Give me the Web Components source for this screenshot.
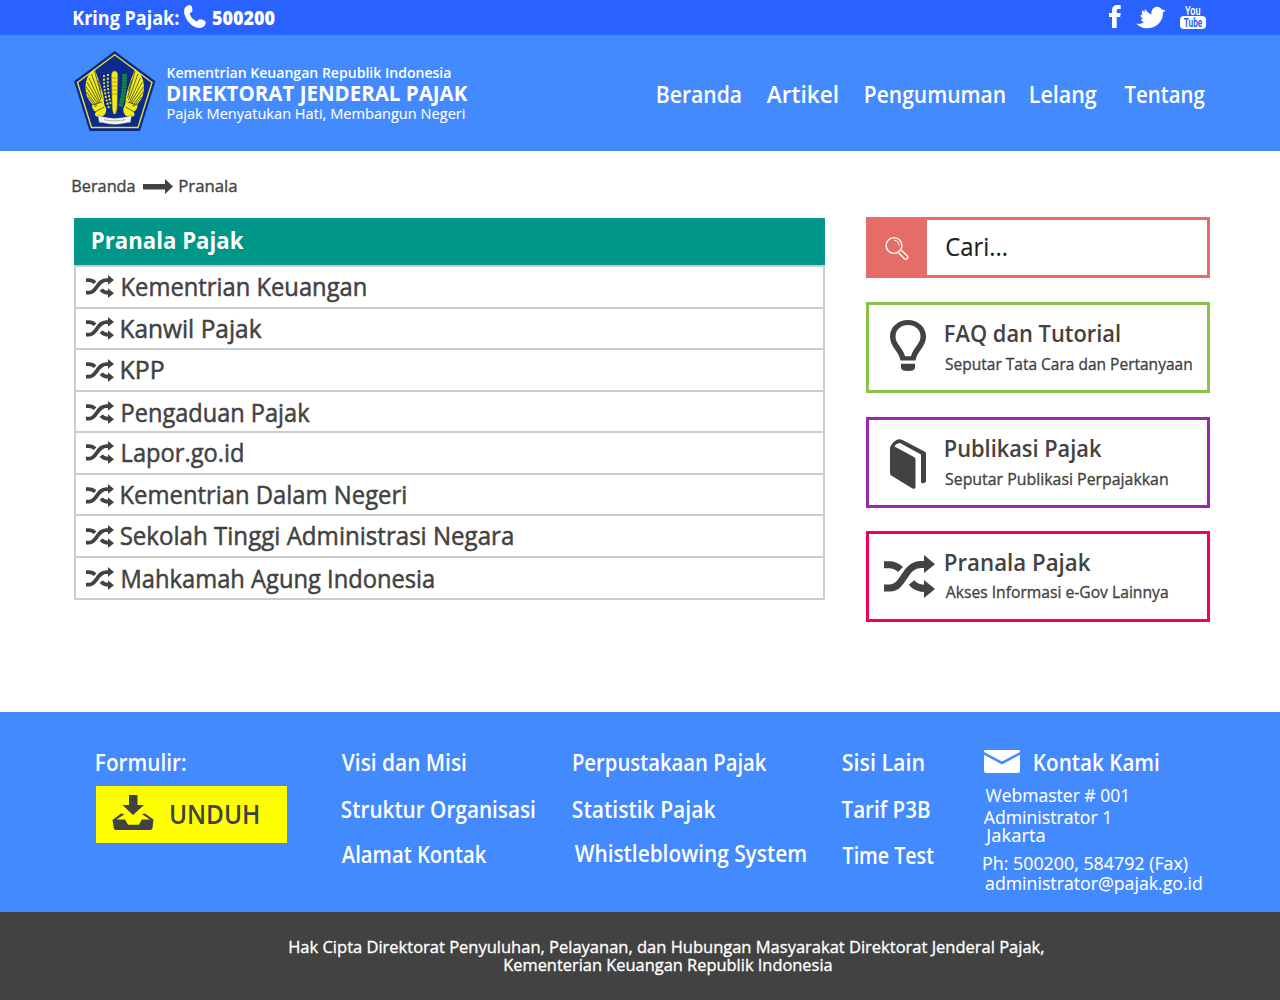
<!DOCTYPE html>
<html lang="id">
<head>
<meta charset="utf-8">
<title>Direktorat Jenderal Pajak</title>
<style>
html,body{margin:0;padding:0;background:#fff}
body{font-family:"Open Sans","Noto Sans",sans-serif}
</style>
</head>
<body>
<pajak-page></pajak-page>
<script>
/* One line of text, fitted to a given ink width; the box runs from cap height to baseline. */
class FitText extends HTMLElement {
  connectedCallback() {
    const w = +this.getAttribute('w'), s = +this.getAttribute('s') || 23, wt = this.getAttribute('wt') || 600;
    const h = Math.round(s * 0.72);
    const c = FitText.ctx || (FitText.ctx = document.createElement('canvas').getContext('2d'));
    const measure = z => { c.font = `${wt} ${z}px "Open Sans","Noto Sans",sans-serif`; return c.measureText(this.textContent); };
    const m = measure(s), b = measure(s * 10);
    const left = b.actualBoundingBoxLeft / 10, right = b.actualBoundingBoxRight / 10;
    const k = (w - 1.4) / (right + left);
    const A = Math.round(m.fontBoundingBoxAscent), D = Math.round(m.fontBoundingBoxDescent);
    const dy = Math.round(h - ((h - A - D) / 2 + A)) + (+this.getAttribute('dy') || 0);
    const stroke = wt === '500' ? s * 0.02 : wt === '400' ? s * 0.006 : 0;
    this.attachShadow({mode: 'open'}).innerHTML = `<style>
      :host{display:block;flex:none;width:${w}px;height:${h}px;line-height:${h}px;white-space:nowrap;
        font-size:${s}px;font-weight:${wt === '500' ? 400 : wt};-webkit-text-stroke:${stroke.toFixed(2)}px currentColor}
      span{display:block;width:max-content;transform-origin:0 0;
        transform:translate(${(left * k + 0.8).toFixed(2)}px,${dy}px) scaleX(${k.toFixed(4)})}
    </style><span><slot></slot></span>`;
  }
}
customElements.define('fit-text', FitText);

const wing = `<path fill="#f2ea1c" d="M20.500 18C13 23 10.500 32 12 41C12.500 46 15 50 18 53C17.500 57 20 60 22 61C20 63 21 66 25 66C30 66 33 62 32 57C29.500 53 30 50 29.500 46C28 37 24 27 20.500 18Z"/>
  <path stroke="#3c4a28" stroke-width=".8" fill="none" d="M20.500 20L28 47M17.500 23L27 49M15 27L26 51M13 31L25 52M12 36L24 53M12.500 41L23 55M14 46L22 56M18 54L28 51M21 61L30 56M24 29L27 40"/>`;
const ICONS = {
  shuffle: ['0 0 51 43', `<g fill="none" stroke="currentColor" stroke-width="7"><path d="M0 9.700H5C10 9.700 13 11 16.500 14.500"/><path d="M0 33H6C20 33 20 9.500 37 9.500H42"/><path d="M27.500 27.500C31 32 35 33.500 42 33.500"/></g><path fill="currentColor" d="M40 0L51 9.300L40 18ZM40 25L51 34L40 43Z"/>`],
  arrow: ['0 0 30 15', `<path fill="currentColor" d="M0 5H22V0L30 7.500L22 15V10.500H0Z"/>`],
  search: ['0 0 24 24', `<g fill="none" stroke="#fff" stroke-width="1.400"><circle cx="9" cy="9.500" r="7.900"/><path d="M9 4.200a5.500 5.500 0 0 1 5 5" stroke-width="1"/><path d="M13.600 16.800L19.500 22.700Q21 23.800 22.300 22.400Q23.400 21 22.200 19.700L16.300 14.200"/></g>`],
  bulb: ['0 0 36 51', `<path fill="currentColor" fill-rule="evenodd" d="M18 0C28 0 36 7 36 16.500C36 27 27 31 25.500 40.500H10.500C9 31 0 27 0 16.500C0 7 8 0 18 0ZM18 5C11 5 5.500 9.500 5.500 16.500C5.500 24 13 28 15 36.200H21C23 28 30.500 24 30.500 16.500C30.500 9.500 25 5 18 5Z"/><path fill="currentColor" d="M11 43.700H25V47.500Q25 51 18 51Q11 51 11 47.500Z"/>`],
  book: ['0 0 37 50', `<path fill="currentColor" d="M2.800 6Q0 7 0 9V34Q0 36 2 37L22.500 49.500Q25.500 50.500 25.500 48V20.500Q25.500 19 24 18L4.500 7.500Q5.500 4.500 10 4L31 15.500V43Q31.500 45 34 44Q36 43.500 36 42V14.500Q36 13 34.500 12.500L12 .8Q9-.6 6 1.200Q2 3.500 0 8Z"/>`],
  phone: ['0 0 22 23', `<path fill="currentColor" d="M4.500 .3Q6.500-.5 7.800 1.500L8.500 5Q8.700 7 6.300 7.800Q5.500 8.200 6 9.500Q7.500 13.500 12 16Q13.300 16.600 14 15.500Q15 13.700 17 14.300L20.500 15.600Q22.300 16.800 21.500 19Q20.300 22.500 16 22.900Q9 23.200 3.800 16Q-.5 10 .2 5Q.8 1.500 4.500 .3Z"/>`],
  fb: ['0 0 12 23', `<path fill="currentColor" d="M3 23V12H0V8H3V5.500Q3 0 8.300 0H11.700V4H9.500Q7.700 4 7.700 5.800V8H11.700L11.200 12H7.700V23Z"/>`],
  twitter: ['0 0 30 23', `<path fill="currentColor" d="M0 17.500Q4.500 18.800 8 16.300Q5.300 15.700 5 13.500L7.300 13Q4.300 11.300 4.700 8.700L6.800 9.200Q5 6.500 6.300 4L8.500 6L9 3Q12.500 7.500 15.300 8.500Q15.300 2 20 .8Q24 .2 25.800 3.300L29.700 4.800L27 6.300Q27.200 13.500 22 18.300Q17 22.800 9.500 22.300Q4 21.600 0 17.500Z"/>`],
  youtube: ['0 0 26 25', `<text x="5" y="10.500" font-family="Roboto,sans-serif" font-size="13.500" font-weight="500" fill="currentColor" textLength="15.500" lengthAdjust="spacingAndGlyphs">You</text><rect y="12" width="26" height="13" rx="4" fill="currentColor"/><text x="3.800" y="23.300" font-family="Roboto,sans-serif" font-size="13" font-weight="700" fill="#2962ff" textLength="18.500" lengthAdjust="spacingAndGlyphs">Tube</text>`],
  mail: ['0 0 36 23', `<path fill="currentColor" d="M0 2V1Q0 0 1.500 0H34.500Q36 0 36 1V2L18 11.500Z"/><path fill="currentColor" d="M0 4.700L18 14.500L36 4.700V21Q36 23 34 23H2Q0 23 0 21Z"/>`],
  inbox: ['0 0 42 35', `<path fill="currentColor" d="M17 0H25.500V10H32L21 20L10.500 10H17Z"/><path fill="currentColor" d="M.5 25L9 18.500L12.500 19.300L4.500 24.500H13L16 29.700H27L29.700 24.500H38L30 19.300L33 18.500L41.500 24.500L40.500 33Q40 35 38 35H4Q2 35 1.700 33Z"/>`],
  emblem: ['0 0 82 80', `<path fill="#0b2a8c" d="M40.700 0L81.500 30.300L66 80H15.500L0 30.300Z"/><path fill="none" stroke="#e8e032" stroke-width="1.400" d="M40.700 3.800L78 31.500L64 76.500H17.500L3.500 31.500Z"/>${wing}<g transform="matrix(-1 0 0 1 81.500 0)">${wing}</g>
    <path fill="#f2ea1c" stroke="#8e7d14" stroke-width=".5" d="M37.500 27V24Q37.800 20 40.700 20Q43.500 20 43.800 24V27L43 58L41.500 63H39.500L38.300 58Z"/><path stroke="#8e7d14" stroke-width=".6" d="M37.500 27H44M38 31H43.500M38 35H43.500M38 39H43.500M38 43H43.500"/>
    <path stroke="#148a3c" stroke-width="4.500" stroke-dasharray="2.600 .4" d="M50.500 23Q51 40 46.500 55.500"/><path fill="none" stroke="#e8e032" stroke-width="1.900" stroke-dasharray="2 1.500" d="M30 24Q29.500 42 35 57M34 23Q33 40 37 54"/>
    <path fill="#f4f4f4" stroke="#555" stroke-width=".4" d="M24 64.500L28 65.500Q40.700 69 53.500 65.500L57.500 64.500L56.500 71.500L53 71.800Q40.700 75 28.500 71.800L25 71.500Z"/><path stroke="#777" stroke-width="1" fill="none" stroke-dasharray="1.200 .7" d="M30 68.600Q40.700 71 51.500 68.600"/>`]
};
class UiIcon extends HTMLElement {
  connectedCallback() {
    const [vb, body] = ICONS[this.getAttribute('name')];
    this.attachShadow({mode: 'open'}).innerHTML = `<style>:host{display:block;flex:none;width:${this.getAttribute('w')}px;height:${this.getAttribute('h')}px}svg{display:block;width:100%;height:100%;overflow:visible}</style><svg viewBox="${vb}" preserveAspectRatio="none" fill="none">${body}</svg>`;
  }
}
customElements.define('ui-icon', UiIcon);

const define = (name, css, html) => customElements.define(name, class extends HTMLElement {
  connectedCallback() {
    this.attachShadow({mode: 'open'}).innerHTML =
      `<style>:host,div,nav,a,main,section{box-sizing:border-box}a{color:inherit;text-decoration:none}${css}</style>${html}`;
  }
});

define('top-bar', `:host{display:flex;height:35px;background:#2962ff;color:#fff;padding:0 74px 0 73px;align-items:flex-start}
  .phone{margin:5px 6px 0 5px}.t{margin-top:11px}.sp{flex:1}.fb{margin-top:5px}.tw{margin:6px 14px 0 15px}.yt{margin-top:4px}`,
  `<fit-text class="t" w="106" s="19" wt="700">Kring Pajak:</fit-text><ui-icon class="phone" name="phone" w="22" h="23"></ui-icon><fit-text class="t" w="63" s="19" wt="800">500200</fit-text><div class="sp"></div>
  <ui-icon class="fb" name="fb" w="12" h="23"></ui-icon><ui-icon class="tw" name="twitter" w="30" h="23"></ui-icon><ui-icon class="yt" name="youtube" w="26" h="25"></ui-icon>`);

define('site-header', `:host{display:flex;height:116px;background:#448aff;color:#fff;padding:16px 75px 0 74px}
  .brand{margin:16px 0 0 11px;display:flex;flex-direction:column}.l2{margin-top:7px}.l3{margin-top:7px}
  nav{margin:34px 0 0 auto;display:flex}`,
  `<ui-icon name="emblem" w="82" h="80"></ui-icon><div class="brand"><fit-text w="284" s="15">Kementrian Keuangan Republik Indonesia</fit-text><fit-text class="l2" w="301" s="22" wt="700">DIREKTORAT JENDERAL PAJAK</fit-text><fit-text class="l3" w="298" s="15" wt="400">Pajak Menyatukan Hati, Membangun Negeri</fit-text></div>
  <nav><a><fit-text w="84" s="23.5" dy=".5">Beranda</fit-text></a><a style="margin-left:25px"><fit-text w="72" s="23.5" dy=".5">Artikel</fit-text></a><a style="margin-left:27px"><fit-text w="140" s="23.5" dy=".5">Pengumuman</fit-text></a><a style="margin-left:25px"><fit-text w="67" s="23.5" dy=".5">Lelang</fit-text></a><a style="margin-left:27px"><fit-text w="81" s="23.5" dy=".5">Tentang</fit-text></a></nav>`);

define('bread-crumb', `:host{display:flex;height:67px;padding:29px 0 0 72px;color:#424242}.a{margin:-1px 6px 0 8px}`,
  `<fit-text w="63" s="16.5" wt="500">Beranda</fit-text><ui-icon class="a" name="arrow" w="30" h="15"></ui-icon><fit-text w="58" s="16.5" wt="500">Pranala</fit-text>`);

const rows = [['Kementrian Keuangan',122,244,42,10],['Kanwil Pajak',121,141,41,10],['KPP',121,43,42,11],['Pengaduan Pajak',122,188,41,11],['Lapor.go.id',122,121,42,9.5],['Kementrian Dalam Negeri',121,285,41,10.5],['Sekolah Tinggi Administrasi Negara',120,393,42,11],['Mahkamah Agung Indonesia',122,312,42,11]];
define('link-list', `:host{display:block;width:751px}.h{height:47px;background:#009688;color:#fff;padding:14px 0 0 17.5px}
  .b{border:2px solid #ccc;border-top:0;border-radius:0 0 2px 2px;color:#424242}
  a{display:flex;border-top:2px solid #ccc;padding-left:10px}a fit-text{margin-top:11px}`,
  `<div class="h"><fit-text w="152" s="24" wt="700">Pranala Pajak</fit-text></div><div class="b">${rows.map((r, i) =>
    `<a style="height:${r[3]}px"><ui-icon name="shuffle" w="28" h="23" style="margin-top:${r[4] - 2}px"></ui-icon><fit-text w="${r[2]}" s="25" wt="500" dy="${i === 3 || i === 7 ? 1 : 0}" style="margin-left:${r[1] - 114}px">${r[0]}</fit-text></a>`).join('')}</div>`);

define('search-box', `:host{display:flex;width:344px;height:61px;border:3px solid #e66c68;background:#fff;color:#212121}
  .i{width:58px;background:#e66c68;padding:16px 0 0 15.500px}fit-text{margin:17px 0 0 18.500px}`,
  `<div class="i"><ui-icon name="search" w="24" h="24"></ui-icon></div><fit-text w="61" s="25" wt="400" dy=".5">Cari...</fit-text>`);

define('info-card', `:host{display:flex;width:344px;height:91px;border:3px solid;color:#424242}`, `<slot></slot>`);

define('side-bar', `:host{display:block;width:344px}info-card{margin-top:24px}.t{flex:none;display:flex;flex-direction:column}`,
  `<search-box></search-box>
  <info-card style="border-color:#8bc34a"><ui-icon name="bulb" w="36" h="51" style="margin:15px 0 0 21px"></ui-icon><div class="t" style="margin:20px 0 0 19px"><fit-text w="175" s="24">FAQ dan Tutorial</fit-text><fit-text w="247" s="16.5" wt="500" style="margin-top:16px">Seputar Tata Cara dan Pertanyaan</fit-text></div></info-card>
  <info-card style="border-color:#9c27b0"><ui-icon name="book" w="37" h="50" style="margin:19px 0 0 20.500px"></ui-icon><div class="t" style="margin:20px 0 0 18px"><fit-text w="157" s="24">Publikasi Pajak</fit-text><fit-text w="223" s="16.5" wt="500" style="margin-top:16px">Seputar Publikasi Perpajakkan</fit-text></div></info-card>
  <info-card style="border-color:#f50057;margin-top:23px"><ui-icon name="shuffle" w="51" h="43" style="margin:21px 0 0 15px"></ui-icon><div class="t" style="margin:20px 0 0 10px"><fit-text w="146" s="24">Pranala Pajak</fit-text><fit-text w="223" s="16.5" wt="500" style="margin-top:15px">Akses Informasi e-Gov Lainnya</fit-text></div></info-card>`);

const col = (x, items) => `<div class="c" style="margin-left:${x}px">${items.map(([t, w, mt, ml]) => `<a><fit-text w="${w}" s="23.5" style="margin:${mt}px 0 0 ${ml}px" dy=".5">${t}</fit-text></a>`).join('')}</div>`;
define('site-footer', `:host{display:block;color:#fff}
  .m{display:flex;height:200px;background:#448aff;padding:0 0 0 96px}.c{display:flex;flex-direction:column;flex:none}
  .dl{display:flex;margin-top:16px;width:191px;height:57px;background:#ff0;color:#424242;padding:9px 0 0 16px}.dl fit-text{margin:10px 0 0 16px}
  .k{display:flex}.cp{height:88px;background:#424242;display:flex;flex-direction:column;padding:29px 0 0 289px}`,
  `<div class="m"><div class="c" style="width:191px"><fit-text w="90" s="23.5" dy=".5" style="margin-top:41px">Formulir:</fit-text><a class="dl"><ui-icon name="inbox" w="42" h="35"></ui-icon><fit-text w="89" s="26.5">UNDUH</fit-text></a></div>
  <div style="width:285px">${col(54, [['Visi dan Misi',125,41,0],['Struktur Organisasi',194,30,0],['Alamat Kontak',146,28,0]])}</div>
  <div style="width:269px">${col(0, [['Perpustakaan Pajak',194,41,1],['Statistik Pajak',144,30,0],['Whistleblowing System',232,27,2]])}</div>
  <div style="width:142px">${col(0, [['Sisi Lain',82,41,1],['Tarif P3B',89,30,0],['Time Test',92,29,1]])}</div>
  <div class="c"><div class="k"><ui-icon name="mail" w="36" h="23" style="margin:38px 0 0 1px"></ui-icon><fit-text w="125" s="23.5" dy=".5" style="margin:41px 0 0 14px">Kontak Kami</fit-text></div>
  <fit-text w="142" s="19" wt="400" style="margin:15px 0 0 2px">Webmaster # 001</fit-text><fit-text w="126" s="19" wt="400" style="margin-top:8px">Administrator 1</fit-text><fit-text w="61" s="19" wt="400" style="margin:4px 0 0 1px">Jakarta</fit-text><fit-text w="205" s="19" wt="400" style="margin-top:14px">Ph: 500200, 584792 (Fax)</fit-text><fit-text w="217" s="19" wt="400" style="margin:6px 0 0 2px">administrator@pajak.go.id</fit-text></div></div>
  <div class="cp"><fit-text w="755" s="16.5" wt="500">Hak Cipta Direktorat Penyuluhan, Pelayanan, dan Hubungan Masyarakat Direktorat Jenderal Pajak,</fit-text><fit-text w="328" s="16.5" wt="500" style="margin:6px 0 0 215px">Kementerian Keuangan Republik Indonesia</fit-text></div>`);

define('pajak-page', `:host{display:flex;flex-direction:column;width:1280px;height:1000px;overflow:hidden;background:#fff}
  main{display:flex;height:494px;padding-left:74px}side-bar{margin:-1px 0 0 41px}`,
  `<top-bar></top-bar><site-header></site-header><bread-crumb></bread-crumb><main><link-list></link-list><side-bar></side-bar></main><site-footer></site-footer>`);
</script>
</body>
</html>
